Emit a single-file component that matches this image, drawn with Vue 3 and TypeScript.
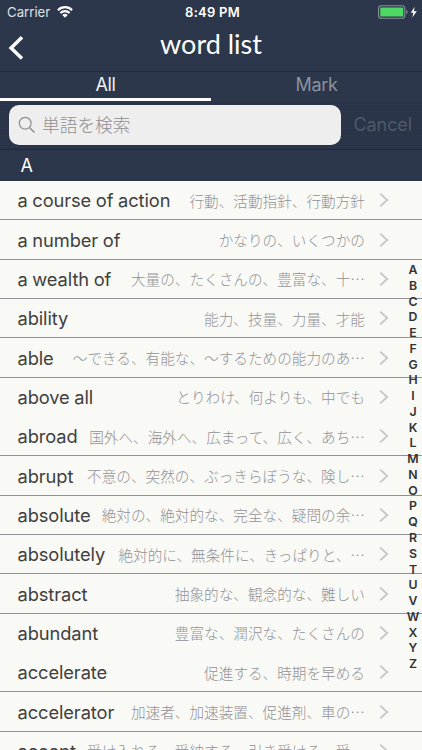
<script setup lang="ts">
interface Entry {
  word: string
  meaning: string
  last?: boolean
}

const entries: Entry[] = [
  { word: 'a course of action', meaning: '行動、活動指針、行動方針' },
  { word: 'a number of', meaning: 'かなりの、いくつかの' },
  { word: 'a wealth of', meaning: '大量の、たくさんの、豊富な、十…' },
  { word: 'ability', meaning: '能力、技量、力量、才能' },
  { word: 'able', meaning: '～できる、有能な、～するための能力のあ…' },
  { word: 'above all', meaning: 'とりわけ、何よりも、中でも', last: true },
  { word: 'abroad', meaning: '国外へ、海外へ、広まって、広く、あち…' },
  { word: 'abrupt', meaning: '不意の、突然の、ぶっきらぼうな、険し…' },
  { word: 'absolute', meaning: '絶対の、絶対的な、完全な、疑問の余…' },
  { word: 'absolutely', meaning: '絶対的に、無条件に、きっぱりと、…' },
  { word: 'abstract', meaning: '抽象的な、観念的な、難しい' },
  { word: 'abundant', meaning: '豊富な、潤沢な、たくさんの', last: true },
  { word: 'accelerate', meaning: '促進する、時期を早める' },
  { word: 'accelerator', meaning: '加速者、加速装置、促進剤、車の…' },
  { word: 'accept', meaning: '受け入れる、受納する、引き受ける、受…' },
]

const letters: string[] = 'ABCDEFGHIJKLMNOPQRSTUVWXYZ'.split('')
</script>

<template>
  <main class="screen" lang="ja">
    <div class="status">
      <div class="carrier">
        <span>Carrier</span>
        <svg class="wifi" viewBox="0 0 16 12" width="16" height="12">
          <path d="M.9 4.2C5 .2 11 .2 15.1 4.2M3.4 7C6 4.5 10 4.5 12.6 7" fill="none" stroke="#fff" stroke-width="2.2" />
          <path d="M5.3 8.9Q8 6.5 10.7 8.9L8 11.7Z" fill="#fff" />
        </svg>
      </div>
      <span class="time">8:49 PM</span>
      <svg class="battery" viewBox="0 0 40 14" width="40" height="14">
        <rect x=".6" y=".8" width="26.2" height="12.4" rx="2.8" fill="none" stroke="#8992a0" stroke-width="1.1" />
        <rect x="2.3" y="2.4" width="23" height="9.2" rx="1.2" fill="#4cd964" />
        <path d="M28.2 5v4q1.5-.6 1.5-2t-1.5-2Z" fill="#8992a0" />
        <path d="M36.7 1.8 32.8 7.7h2.6L34.2 12.4 38.8 6.3h-2.9Z" fill="#fff" />
      </svg>
    </div>

    <header class="nav">
      <svg class="back" viewBox="0 0 16 26" width="16" height="26">
        <path d="M14 2.2 3.1 12.9 14 23.4" fill="none" stroke="#fff" stroke-width="3.5" />
      </svg>
      <h1>word list</h1>
    </header>

    <nav class="tabs">
      <span class="tab active">All</span>
      <span class="tab">Mark</span>
    </nav>

    <div class="search">
      <div class="field">
        <svg viewBox="0 0 18 18" width="18" height="18">
          <circle cx="7.2" cy="7.2" r="5.9" fill="none" stroke="#8d8d92" stroke-width="1.2" />
          <path d="m11.5 11.5 5 5" stroke="#8d8d92" stroke-width="1.5" />
        </svg>
        <span>単語を検索</span>
      </div>
      <span class="cancel">Cancel</span>
    </div>

    <div class="section">A</div>

    <div class="content">
      <ul class="list">
        <li v-for="entry in entries" :key="entry.word" class="row" :class="{ plain: entry.last }">
          <span class="word">{{ entry.word }}</span>
          <span class="meaning">{{ entry.meaning }}</span>
          <svg class="chevron" viewBox="0 0 10 16" width="10" height="16">
            <path d="m1.2 1.6 7 6.4-7 6.4" fill="none" stroke="#c5c5ca" stroke-width="1.8" />
          </svg>
        </li>
      </ul>
      <div class="index">
        <span v-for="letter in letters" :key="letter">{{ letter }}</span>
      </div>
    </div>
  </main>
</template>

<style>
body {
  margin: 0;
  overflow: hidden;
}
</style>

<style scoped>
.screen {
  width: 422px;
  height: 750px;
  overflow: hidden;
  display: flex;
  flex-direction: column;
  background: #f9f9f5;
  font-family: Inter, "Noto Sans CJK JP", sans-serif;
}
.status {
  flex: none;
  height: 24px;
  box-sizing: border-box;
  padding: 0 4px 0 7px;
  display: grid;
  grid-template-columns: 1fr auto 1fr;
  align-items: center;
  background: #2c374b;
  color: #fff;
  font-size: 13px;
}
.carrier {
  display: flex;
  align-items: center;
  gap: 7px;
  color: #dfe2e7;
  font-size: 13.2px;
}
.time {
  font-weight: 600;
  font-size: 13px;
  letter-spacing: 0.25px;
}
.battery {
  justify-self: end;
}
.nav {
  flex: none;
  height: 48px;
  box-sizing: border-box;
  padding: 0 9px 0 8px;
  display: grid;
  grid-template-columns: 16px 1fr 16px;
  align-items: center;
  background: #2c374b;
  border-bottom: 1px solid #222c3e;
}
h1 {
  margin: -7px 0 0 1px;
  text-align: center;
  color: #fff;
  font: 400 27px/32px Lato, sans-serif;
}
.tabs {
  flex: none;
  height: 29px;
  display: grid;
  grid-template-columns: 1fr 1fr;
  background: #2c374b;
}
.tab {
  box-sizing: border-box;
  border-bottom: 4px solid transparent;
  text-align: center;
  font-size: 18px;
  letter-spacing: -0.3px;
  line-height: 26px;
  color: #8b929e;
}
.active {
  color: #f1f3f6;
  border-bottom-color: #fff;
}
.search {
  flex: none;
  height: 49px;
  box-sizing: border-box;
  padding: 4px 10px 5px 9px;
  display: flex;
  align-items: flex-start;
  justify-content: space-between;
  background: repeating-linear-gradient(#2b364b 0 2px, #283347 2px 3px);
  border-bottom: 1px solid #1f293b;
}
.field {
  width: 332px;
  height: 40px;
  box-sizing: border-box;
  padding-left: 9px;
  display: flex;
  align-items: center;
  gap: 6px;
  background: #eee;
  border-radius: 10px;
  color: #8f8f94;
  font-family: "Noto Sans CJK JP", sans-serif;
  font-size: 17.7px;
  font-weight: 300;
  line-height: 40px;
}
.field span {
  margin-top: -2px;
}
.cancel {
  color: #4f596a;
  font-size: 18px;
  letter-spacing: -0.1px;
  line-height: 39px;
}
.section {
  flex: none;
  height: 31px;
  box-sizing: border-box;
  padding-left: 20.5px;
  background: #2c374b;
  color: #fff;
  font-size: 18px;
  line-height: 32px;
}
.content {
  flex: 1;
  min-height: 0;
  display: grid;
  grid-template-columns: 1fr;
}
.list {
  grid-area: 1 / 1;
  margin: 0;
  padding: 0;
  list-style: none;
}
.row {
  height: 39.35px;
  box-sizing: border-box;
  padding: 0 33px 0 17.5px;
  display: flex;
  align-items: center;
  border-bottom: 1px solid #909095;
}
.plain {
  border-bottom-color: transparent;
}
.word {
  flex: none;
  color: #404040;
  font-size: 18.3px;
  letter-spacing: -0.09px;
  word-spacing: -0.4px;
}
.meaning {
  flex: 1;
  margin-top: 1px;
  text-align: right;
  white-space: nowrap;
  color: #939398;
  font-family: "Noto Sans CJK JP", sans-serif;
  font-size: 14.63px;
  font-weight: 300;
  line-height: 20px;
}
.chevron {
  flex: none;
  margin-left: 14px;
}
.index {
  grid-area: 1 / 1;
  justify-self: end;
  width: 18px;
  padding-top: 81px;
  display: flex;
  flex-direction: column;
  text-align: center;
  color: #333;
  font-size: 12.3px;
  font-weight: 600;
  line-height: 15.77px;
}
</style>
